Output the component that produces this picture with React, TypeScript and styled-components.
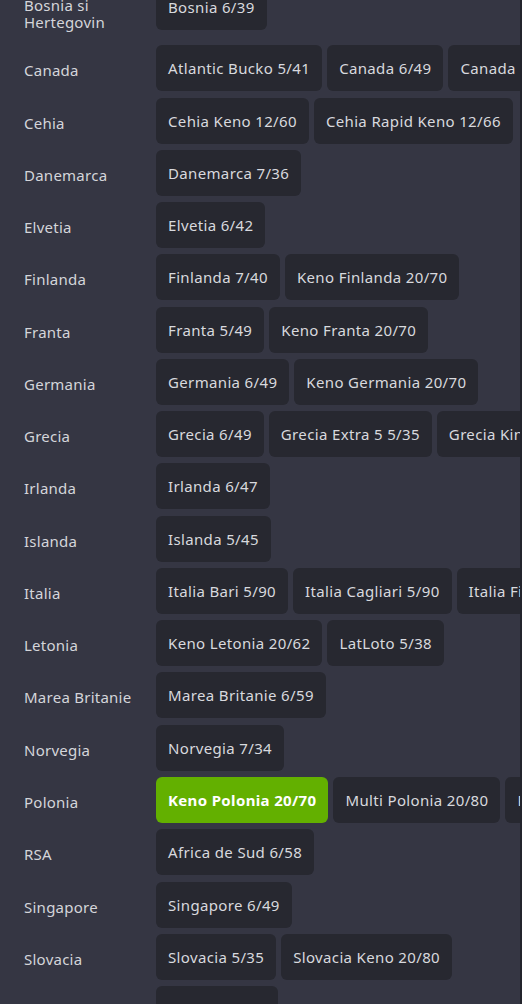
import React from "react";
import styled, { createGlobalStyle } from "styled-components";

type Country = {
  name: string;
  games: string[];
  active?: string;
};

const countries: Country[] = [
  { name: "Bosnia si Hertegovin", games: ["Bosnia 6/39"] },
  { name: "Canada", games: ["Atlantic Bucko 5/41", "Canada 6/49", "Canada Lotto Max 7/50"] },
  { name: "Cehia", games: ["Cehia Keno 12/60", "Cehia Rapid Keno 12/66"] },
  { name: "Danemarca", games: ["Danemarca 7/36"] },
  { name: "Elvetia", games: ["Elvetia 6/42"] },
  { name: "Finlanda", games: ["Finlanda 7/40", "Keno Finlanda 20/70"] },
  { name: "Franta", games: ["Franta 5/49", "Keno Franta 20/70"] },
  { name: "Germania", games: ["Germania 6/49", "Keno Germania 20/70"] },
  { name: "Grecia", games: ["Grecia 6/49", "Grecia Extra 5 5/35", "Grecia Kino 20/80"] },
  { name: "Irlanda", games: ["Irlanda 6/47"] },
  { name: "Islanda", games: ["Islanda 5/45"] },
  { name: "Italia", games: ["Italia Bari 5/90", "Italia Cagliari 5/90", "Italia Firenze 5/90"] },
  { name: "Letonia", games: ["Keno Letonia 20/62", "LatLoto 5/38"] },
  { name: "Marea Britanie", games: ["Marea Britanie 6/59"] },
  { name: "Norvegia", games: ["Norvegia 7/34"] },
  {
    name: "Polonia",
    games: ["Keno Polonia 20/70", "Multi Polonia 20/80", "Polonia 6/49"],
    active: "Keno Polonia 20/70"
  },
  { name: "RSA", games: ["Africa de Sud 6/58"] },
  { name: "Singapore", games: ["Singapore 6/49"] },
  { name: "Slovacia", games: ["Slovacia 5/35", "Slovacia Keno 20/80"] },
  { name: "Slovenia", games: ["Slovenia 7/44"] }
];

const GlobalStyle = createGlobalStyle`
  html, body {
    margin: 0;
    padding: 0;
    background: #353643;
    overflow: hidden;
  }
  body {
    font-family: "Noto Sans", Roboto, sans-serif;
  }
`;

const App = () => {
  return (
    <Page>
      <GlobalStyle />
      <List>
        {countries.map((c) => (
          <Row key={c.name}>
            <CountryLabel>{c.name}</CountryLabel>
            <Games>
              {c.games.map((g) => (
                <GameChip key={g} $active={g === c.active}>
                  {g}
                </GameChip>
              ))}
            </Games>
          </Row>
        ))}
      </List>
    </Page>
  );
};

const Page = styled.div`
  width: 100%;
  height: 1004px;
  overflow: hidden;
  box-sizing: border-box;
  border-right: 2px solid #23242c;
  background: #353643;
`;

// list is scrolled a little, first row peeks in from the top
const List = styled.div`
  display: flex;
  flex-direction: column;
  gap: 6.28px;
  margin-top: -16px;
`;

const Row = styled.div`
  display: flex;
  align-items: center;
  padding-left: 24px;
  min-height: 46px;
`;

const CountryLabel = styled.div`
  width: 132px;
  flex: none;
  box-sizing: border-box;
  padding: 13px 12px 8px 0;
  font-size: 15px;
  line-height: 17px;
  font-weight: 400;
  letter-spacing: 0.25px;
  color: #d4d5da;
`;

const Games = styled.div`
  display: flex;
  flex-wrap: nowrap;
  gap: 5px;
  flex: 1;
  min-width: 0;
  overflow: hidden;
  align-self: flex-start;
`;

const GameChip = styled.div<{ $active?: boolean }>`
  flex: none;
  height: 46px;
  display: flex;
  align-items: center;
  padding: 0 12px;
  border-radius: 6px;
  font-size: 15px;
  font-weight: ${(p) => (p.$active ? 700 : 400)};
  letter-spacing: 0.35px;
  white-space: nowrap;
  color: ${(p) => (p.$active ? "#ffffff" : "#d8d9de")};
  background: ${(p) => (p.$active ? "#63b000" : "#272830")};
  cursor: pointer;
`;

export default App;
